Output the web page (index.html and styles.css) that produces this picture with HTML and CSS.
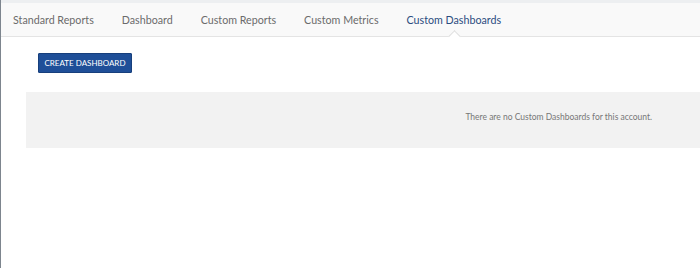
FILE: index.html
```html
<!DOCTYPE html>
<html lang="en">
<head>
  <meta charset="UTF-8" />
  <title>Custom Dashboards</title>
  <link rel="stylesheet" href="styles.css">
</head>
<body>
  <div class="topstrip"></div>
  <nav class="tabs">
    <a class="tab" href="#">Standard Reports</a>
    <a class="tab" href="#">Dashboard</a>
    <a class="tab" href="#">Custom Reports</a>
    <a class="tab" href="#">Custom Metrics</a>
    <a class="tab active" href="#">Custom Dashboards</a>
  </nav>

  <div class="content">
    <button class="create-btn">CREATE DASHBOARD</button>
    <div class="empty">There are no Custom Dashboards for this account.</div>
  </div>
</body>
</html>
```

FILE: styles.css
```css
body {
  margin: 0;
  min-height: 100vh;
  box-sizing: border-box;
  border-left: 1px solid #7d858e;
  background-color: #fff;
  font-family: 'Lato', 'Liberation Sans', sans-serif;
}

.topstrip {
  height: 3px;
  background-color: #edeff1;
}

.tabs {
  display: flex;
  align-items: center;
  height: 33px;
  background-color: #f9f9f9;
  border-bottom: 1px solid #e4e4e4;
}

.tab {
  position: relative;
  height: 100%;
  display: flex;
  align-items: center;
  padding: 0 14px;
  font-size: 10.7px;
  color: #6b6b6b;
  text-decoration: none;
}

.tab:first-child {
  padding-left: 12px;
}

.tab.active {
  color: #2b4c80;
}

.tab.active::after {
  content: '';
  position: absolute;
  left: 50%;
  bottom: -5px;
  width: 8px;
  height: 8px;
  margin-left: -4px;
  background-color: #fff;
  border-top: 1px solid #dedede;
  border-left: 1px solid #dedede;
  transform: rotate(45deg);
}

.content {
  padding: 16px 0 0 25px;
  display: flex;
  flex-direction: column;
  align-items: flex-start;
  gap: 19px;
}

.create-btn {
  margin-left: 12px;
  height: 20px;
  width: 94px;
  padding: 0;
  background-color: #1f4f98;
  border: 1px solid #173f7c;
  border-radius: 1px;
  color: #fff;
  font-family: inherit;
  font-size: 8px;
  cursor: pointer;
}

.empty {
  width: 100%;
  height: 56px;
  box-sizing: border-box;
  padding: 0 48px 6px 0;
  display: flex;
  align-items: center;
  justify-content: flex-end;
  background-color: #f2f2f2;
  font-size: 8.5px;
  color: #777;
}
```
